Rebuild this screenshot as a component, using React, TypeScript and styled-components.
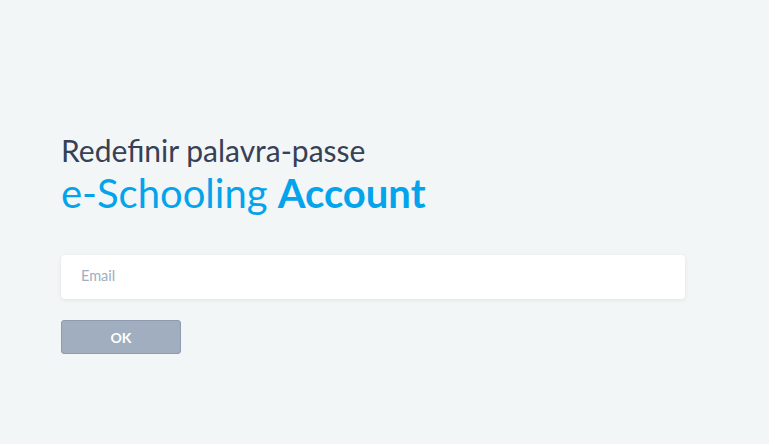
import styled, { createGlobalStyle } from "styled-components";

const GlobalStyle = createGlobalStyle`
  html, body {
    margin: 0;
    padding: 0;
    background-color: #f3f6f7;
    font-family: Lato, "Open Sans", sans-serif;
  }
`;

const Page = styled.div`
  min-height: 444px;
  padding: 132px 61px 0 61px;
  box-sizing: border-box;
`;

const Form = styled.form`
  width: 624px;
  display: flex;
  flex-direction: column;
`;

const Subtitle = styled.h2`
  margin: 0;
  font-size: 30px;
  font-weight: 400;
  line-height: 37px;
  color: #364156;
`;

const Title = styled.h1`
  margin: 0;
  font-size: 40px;
  font-weight: 400;
  line-height: 48px;
  color: #03a4eb;

  b {
    font-weight: 700;
  }
`;

const Input = styled.input`
  margin-top: 38px;
  height: 44px;
  border: none;
  border-radius: 4px;
  background: white;
  box-shadow: 0 1px 4px rgba(0, 0, 0, 0.08);
  padding: 0 20px 3px 20px;
  box-sizing: border-box;
  font-family: inherit;
  font-size: 14.5px;
  color: #364156;
  outline: none;

  &::placeholder {
    color: #a0aec0;
  }
`;

const Button = styled.button`
  margin-top: 21px;
  width: 120px;
  height: 34px;
  border: 1px solid #8d9ab0;
  border-radius: 3px;
  background-color: #a0aec0;
  color: white;
  font-family: inherit;
  font-size: 14px;
  font-weight: 700;
  cursor: pointer;
`;

export default function App() {
  return (
    <>
      <GlobalStyle />
      <Page>
        <Form onSubmit={(e) => e.preventDefault()}>
          <Subtitle>Redefinir palavra-passe</Subtitle>
          <Title>
            e-Schooling <b>Account</b>
          </Title>
          <Input type="email" placeholder="Email" />
          <Button type="submit">OK</Button>
        </Form>
      </Page>
    </>
  );
}
